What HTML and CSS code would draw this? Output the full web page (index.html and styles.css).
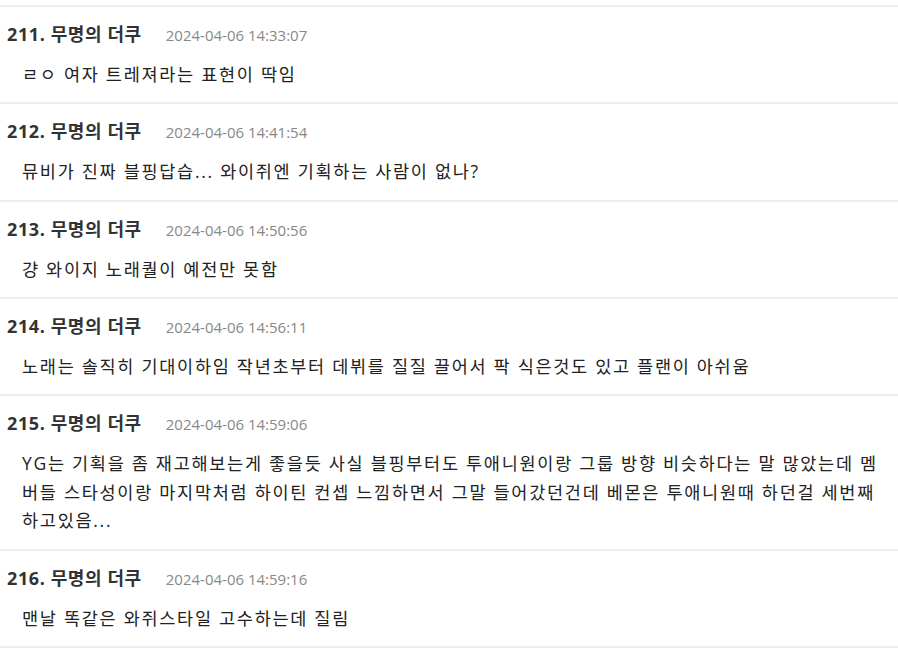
FILE: index.html
```html
<!DOCTYPE html>
<html lang="ko">
<head>
<meta charset="utf-8">
<link rel="stylesheet" href="styles.css">
</head>
<body>
<ul class="comments">
  <li class="comment">
    <div class="head"><span class="author">211. 무명의 더쿠</span><span class="date">2024-04-06 14:33:07</span></div>
    <p class="body">ㄹㅇ 여자 트레져라는 표현이 딱임</p>
  </li>
  <li class="comment">
    <div class="head"><span class="author">212. 무명의 더쿠</span><span class="date">2024-04-06 14:41:54</span></div>
    <p class="body">뮤비가 진짜 블핑답습... 와이쥐엔 기획하는 사람이 없나?</p>
  </li>
  <li class="comment">
    <div class="head"><span class="author">213. 무명의 더쿠</span><span class="date">2024-04-06 14:50:56</span></div>
    <p class="body">걍 와이지 노래퀄이 예전만 못함</p>
  </li>
  <li class="comment">
    <div class="head"><span class="author">214. 무명의 더쿠</span><span class="date">2024-04-06 14:56:11</span></div>
    <p class="body">노래는 솔직히 기대이하임 작년초부터 데뷔를 질질 끌어서 팍 식은것도 있고 플랜이 아쉬움</p>
  </li>
  <li class="comment">
    <div class="head"><span class="author">215. 무명의 더쿠</span><span class="date">2024-04-06 14:59:06</span></div>
    <p class="body">YG는 기획을 좀 재고해보는게 좋을듯 사실 블핑부터도 투애니원이랑 그룹 방향 비슷하다는 말 많았는데 멤버들 스타성이랑 마지막처럼 하이틴 컨셉 느낌하면서 그말 들어갔던건데 베몬은 투애니원때 하던걸 세번째 하고있음...</p>
  </li>
  <li class="comment">
    <div class="head"><span class="author">216. 무명의 더쿠</span><span class="date">2024-04-06 14:59:16</span></div>
    <p class="body">맨날 똑같은 와쥐스타일 고수하는데 질림</p>
  </li>
</ul>
</body>
</html>
```
FILE: styles.css
```css
html, body {
  margin: 0;
  padding: 0;
  background: #fff;
}
body {
  font-family: "Open Sans", "Noto Sans CJK KR", sans-serif;
  color: #333;
}
.comments {
  list-style: none;
  margin: 0;
  padding: 5px 0 0;
}
.comment {
  border-top: 2px solid #eee;
  padding: 15px 7px 13.7px;
}
.comment:last-child {
  border-bottom: 2px solid #eee;
}
.head {
  display: flex;
  align-items: baseline;
  gap: 24px;
  height: 24px;
  line-height: 24px;
}
.author {
  font-size: 18px;
  font-weight: 700;
  letter-spacing: 0.6px;
  color: #333;
}
.date {
  font-size: 15px;
  color: #888;
}
.body {
  margin: 14px 0 0;
  padding-left: 15px;
  font-size: 17.5px;
  letter-spacing: 1.72px;
  line-height: 28.6px;
  color: #222;
}
```
